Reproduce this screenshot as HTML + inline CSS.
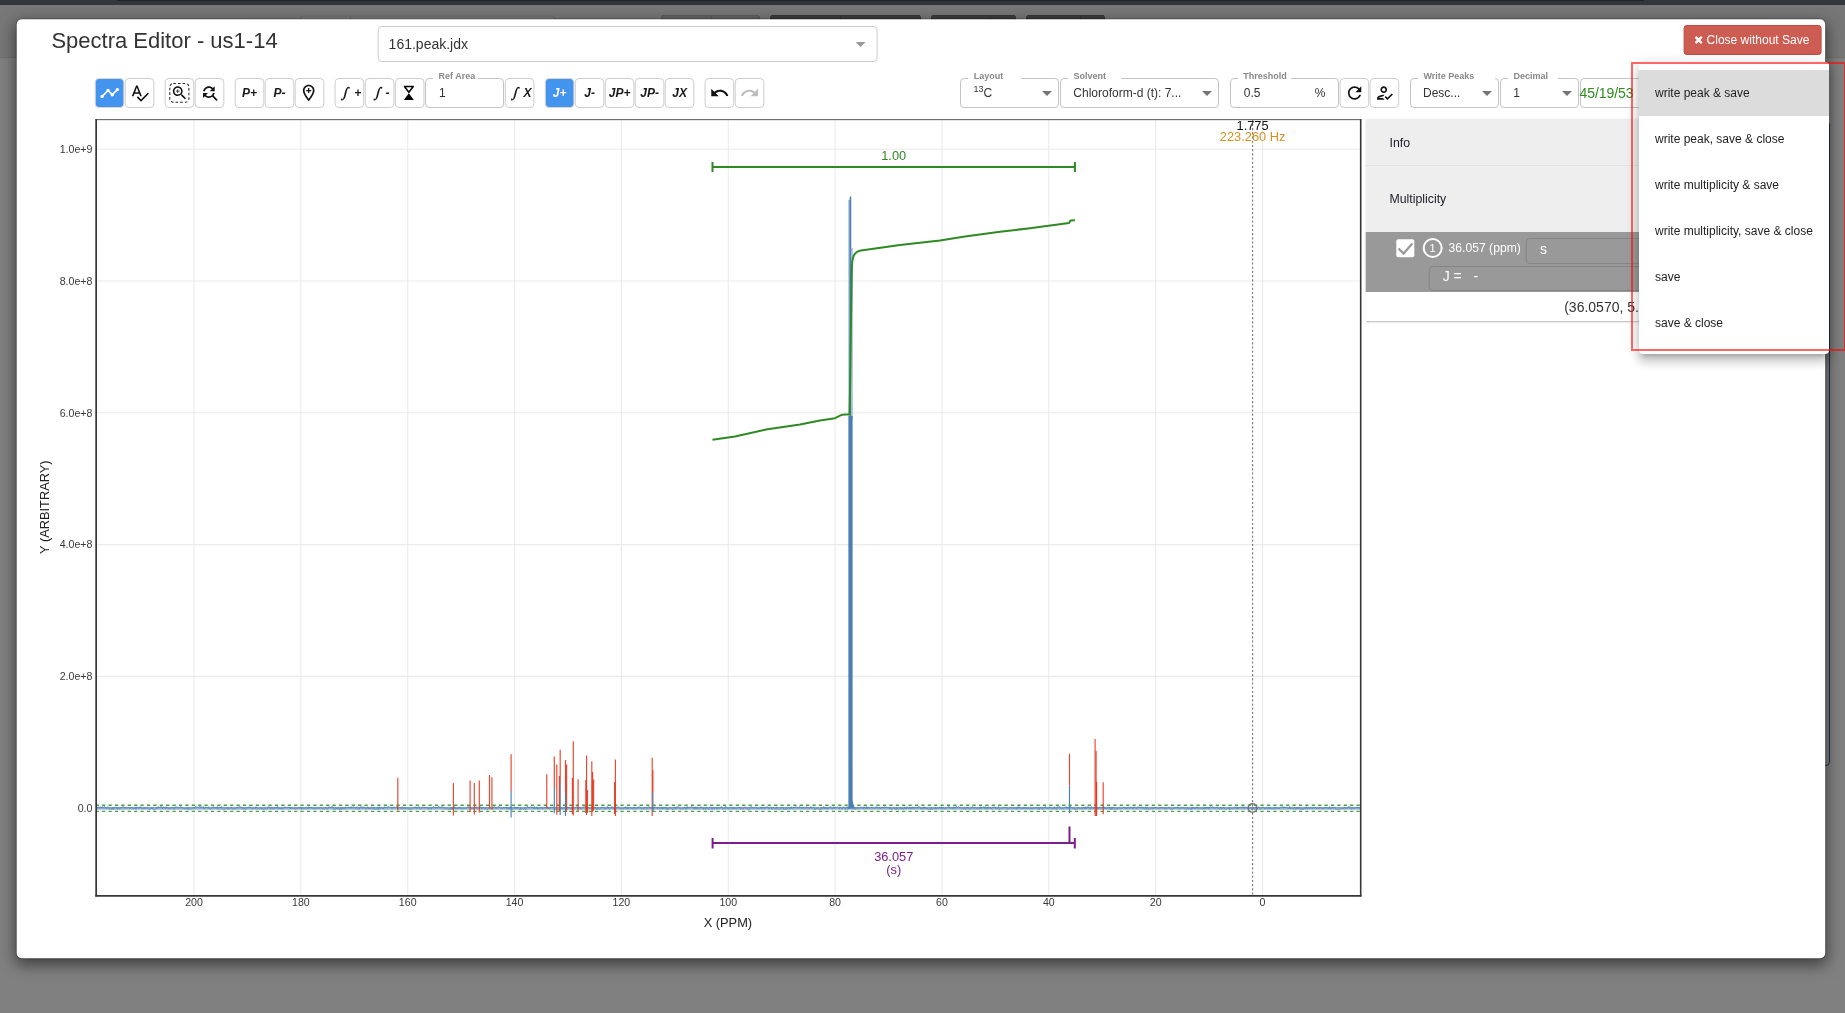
<!DOCTYPE html><html lang="en"><head><meta charset="utf-8"><title>Spectra Editor - us1-14</title><style>
*{box-sizing:border-box}
html,body{margin:0;padding:0}
body{width:1845px;height:1013px;overflow:hidden;background:#808080;position:relative;font-family:"Liberation Sans",sans-serif;color:#333;font-size:14px}
.abs{position:absolute}
.topbar{left:0;top:0;width:1845px;height:5px;background:#35363b}
.nav{left:0;top:5px;width:1845px;height:53px;background:#777;border-bottom:1px solid #707070}
.bgb{top:14px;height:8px;border-radius:4px 4px 0 0;border:1px solid #6a6a6a;border-bottom:0}
.modal{left:15px;top:18px;width:1811px;height:941px;transform-origin:100% 0;transform:translate(0.200px,0.250px) scaleX(0.99972);background:#fff;border:1px solid rgba(0,0,0,.2);border-radius:6px;box-shadow:0 5px 15px rgba(0,0,0,.5);background-clip:padding-box}
  .title{left:51.400px;top:26px;font-size:22px;line-height:30px;color:#333;white-space:nowrap}
.fsel{left:378px;top:26px;transform:translateX(-0.400px);width:500px;height:36px;border:1px solid #ccc;border-radius:4px;background:#fff;line-height:34px;padding-left:10px;font-size:14px;color:#333}
.fsel i{position:absolute;right:11px;top:15px;width:0;height:0;border-style:solid;border-width:5px 5px 0 5px;border-color:#999 transparent transparent transparent}
.close{left:1683px;top:25px;width:137.500px;height:30px;transform:translateX(0.600px);background:#cd5c52;border:1px solid #c24a3e;border-radius:3px;color:#fff;font-size:12px;line-height:28px;text-align:center;white-space:nowrap}
.tb{top:78px;height:30px;width:30px;text-align:center;font-size:12px;line-height:31px;font-weight:bold;font-style:italic;color:#1a1a1a;white-space:nowrap}
.tb.on{color:#fff}
.tb .bx{position:absolute;left:0;top:0;overflow:visible}
.tb .ct{position:absolute;left:0;top:0;width:29.600px;height:30px}
.tb .ig{font-family:'DejaVu Math TeX Gyre','DejaVu Sans',sans-serif;font-weight:bold;font-style:italic;font-size:12px;position:absolute;top:-0.500px;line-height:30px}
.tb .ab{position:absolute;top:0}
.tb .ic{position:absolute;left:50%;top:50%;transform:translate(-50%,-50%)}
.fld{top:78px;height:30px;border:1px solid #c4c4c4;border-radius:4px;background:#fff;font-size:12px;line-height:29px;color:#333;white-space:nowrap}
.fld .lb{position:absolute;top:-8px;height:10px;background:#fff;font-size:9px;line-height:10px;font-weight:bold;color:#888;white-space:nowrap}
.fld .tx{position:absolute;left:13px;top:0}
.fld .dd{position:absolute;right:-1px;top:2px}
sup.iso{font-size:9px;vertical-align:baseline;position:relative;top:-5.500px;line-height:1px}
</style></head><body><div id="root" class="abs" style="left:0;top:0;width:1845px;height:1013px;will-change:transform">
<div class="abs nav"></div><div class="abs topbar"></div><div class="abs" style="left:117px;top:0;width:1527px;height:1px;background:#212227;border-radius:0 0 2px 2px"></div>
<div class="abs bgb" style="left:300px;width:255px;background:#7c7c7c;border-color:#696969;transform:translateY(1.4px)"><div class="abs" style="left:48.5px;top:0;width:1px;height:8px;background:#696969"></div></div>
<div class="abs bgb" style="left:661px;width:99px;background:#636363;border-color:#585858;transform:translateY(0.5px)"><div class="abs" style="left:48.6px;top:0;width:1px;height:8px;background:#585858"></div></div>
<div class="abs bgb" style="left:770px;width:151px;background:#3c3c3c;border-color:#333;transform:translateY(0.5px)"><div class="abs" style="left:68.7px;top:0;width:1px;height:8px;background:#333"></div></div>
<div class="abs bgb" style="left:931px;width:85px;background:#3c3c3c;border-color:#333;transform:translateY(0.5px)"><div class="abs" style="left:58px;top:0;width:1px;height:8px;background:#333"></div></div>
<div class="abs bgb" style="left:1026px;width:79px;background:#3c3c3c;border-color:#333;transform:translateY(0.5px)"><div class="abs" style="left:52.7px;top:0;width:1px;height:8px;background:#333"></div></div>
<div class="abs" style="left:1700px;top:121px;width:130px;height:645px;border:1px solid #1c3150;border-radius:4px"></div>
<div class="abs modal"></div>
<div class="abs title">Spectra Editor - us1-14</div>
<div class="abs fsel">161.peak.jdx<i></i></div>
<div class="abs close"><svg width="8" height="8" viewBox="0 0 8 8" style="position:absolute;left:9.900px;top:10px;overflow:visible" aria-hidden="true"><path d="M0.900 0.900L7.100 7.100M7.100 0.900L0.900 7.100" stroke="#fff" stroke-width="2.350" stroke-linecap="butt" fill="none"/></svg><span style="position:absolute;left:22px;top:0">Close without Save</span></div>
<div class="abs tb on" style="left:94px;"><svg class="bx" width="31" height="30" viewBox="0 0 31 30"><rect x="1.25" y="0.500" width="28.600" height="29" rx="3.800" fill="#4394ee" stroke="#ddd6d0" stroke-width="1"/></svg><div class="ct" style="transform:translateX(0.75px)"><svg class="ic" width="20.4" height="20.4" viewBox="0 0 24 24" fill="#fff" ><path d="M23 8c0 1.1-.9 2-2 2-.18 0-.35-.02-.51-.07l-3.56 3.55c.05.16.07.34.07.52 0 1.1-.9 2-2 2s-2-.9-2-2c0-.18.02-.36.07-.52l-2.55-2.55c-.16.05-.34.07-.52.07s-.36-.02-.52-.07l-4.55 4.56c.05.16.07.33.07.51 0 1.1-.9 2-2 2s-2-.9-2-2 .9-2 2-2c.18 0 .35.02.51.07l4.56-4.55C8.02 9.36 8 9.18 8 9c0-1.1.9-2 2-2s2 .9 2 2c0 .18-.02.36-.07.52l2.55 2.55c.16-.05.34-.07.52-.07s.36.02.52.07l3.55-3.56C19.02 8.35 19 8.18 19 8c0-1.1.9-2 2-2s2 .9 2 2z"/></svg></div></div>
<div class="abs tb" style="left:124px;"><svg class="bx" width="31" height="30" viewBox="0 0 31 30"><rect x="1.25" y="0.500" width="28.600" height="29" rx="3.800" fill="#fff" stroke="#cdcdcd" stroke-width="1"/></svg><div class="ct" style="transform:translateX(0.75px)"><svg class="ic" width="20" height="20" viewBox="0 0 24 24" fill="#111" ><path d="M12.45 16h2.09L9.43 3H7.57L2.46 16h2.09l1.12-3h5.64l1.14 3zm-6.02-5L8.5 5.48 10.57 11H6.43zm15.16.59l-8.09 8.09L9.83 16l-1.41 1.41 5.09 5.09L23 13l-1.41-1.41z"/></svg></div></div>
<div class="abs tb" style="left:164px;"><svg class="bx" width="31" height="30" viewBox="0 0 31 30"><rect x="1.15" y="0.500" width="28.600" height="29" rx="3.800" fill="#fff" stroke="#cdcdcd" stroke-width="1"/></svg><div class="ct" style="transform:translateX(0.65px)"><svg class="ic" width="22" height="22" viewBox="0 0 22 22"><rect x="1.150" y="1.400" width="19.100" height="18.800" rx="3.500" fill="none" stroke="#222" stroke-width="1.050" stroke-dasharray="2.600 2.050"/></svg><svg class="ic" width="18" height="18" viewBox="0 0 24 24" fill="#111" ><path d="M15.5 14h-.79l-.28-.27C15.41 12.59 16 11.11 16 9.5 16 5.91 13.09 3 9.5 3S3 5.91 3 9.5 5.91 16 9.5 16c1.61 0 3.09-.59 4.23-1.57l.27.28v.79l5 4.99L20.49 19l-4.99-5zm-6 0C7.01 14 5 11.99 5 9.5S7.01 5 9.5 5 14 7.01 14 9.5 11.99 14 9.5 14z"/><path d="M12 10h-2v2H9v-2H7V9h2V7h1v2h2v1z"/></svg></div></div>
<div class="abs tb" style="left:194px;"><svg class="bx" width="31" height="30" viewBox="0 0 31 30"><rect x="1.20" y="0.500" width="28.600" height="29" rx="3.800" fill="#fff" stroke="#cdcdcd" stroke-width="1"/></svg><div class="ct" style="transform:translateX(0.70px)"><svg class="ic" width="20" height="20" viewBox="0 0 24 24" fill="#111" ><path d="M11 6c1.38 0 2.63.56 3.54 1.46L12 10h6V4l-2.05 2.05C14.68 4.78 12.93 4 11 4c-3.53 0-6.43 2.61-6.92 6H6.1c.46-2.28 2.48-4 4.9-4zm5.64 9.14c.66-.9 1.12-1.97 1.28-3.14H15.9c-.46 2.28-2.48 4-4.9 4-1.38 0-2.63-.56-3.54-1.46L10 12H4v6l2.05-2.05C7.32 17.22 9.07 18 11 18c1.55 0 2.98-.51 4.14-1.36L20 21.49 21.49 20l-4.85-4.86z"/></svg></div></div>
<div class="abs tb" style="left:234px;"><svg class="bx" width="31" height="30" viewBox="0 0 31 30"><rect x="1.20" y="0.500" width="28.600" height="29" rx="3.800" fill="#fff" stroke="#cdcdcd" stroke-width="1"/></svg><div class="ct" style="transform:translateX(0.70px)">P+</div></div>
<div class="abs tb" style="left:264px;"><svg class="bx" width="31" height="30" viewBox="0 0 31 30"><rect x="1.20" y="0.500" width="28.600" height="29" rx="3.800" fill="#fff" stroke="#cdcdcd" stroke-width="1"/></svg><div class="ct" style="transform:translateX(0.70px)">P-</div></div>
<div class="abs tb" style="left:294px;"><svg class="bx" width="31" height="30" viewBox="0 0 31 30"><rect x="1.20" y="0.500" width="28.600" height="29" rx="3.800" fill="#fff" stroke="#cdcdcd" stroke-width="1"/></svg><div class="ct" style="transform:translateX(0.70px)"><svg class="ic" width="20" height="20" viewBox="0 0 24 24" fill="#111" style="margin-left:-0.500px;margin-top:-0.300px"><path fill-rule="evenodd" d="M12 2C8.130 2 5 5.130 5 9c0 5.250 7 13 7 13s7-7.750 7-13c0-3.870-3.130-7-7-7zM12 4c2.760 0 5 2.240 5 5 0 2.880-2.880 7.190-5 9.880C9.920 16.210 7 11.850 7 9c0-2.760 2.240-5 5-5z"/><path d="M12.750 6h-1.500v2.250H9v1.500h2.250V12h1.500V9.750H15v-1.500h-2.250z"/></svg></div></div>
<div class="abs tb" style="left:334px;"><svg class="bx" width="31" height="30" viewBox="0 0 31 30"><rect x="1.10" y="0.500" width="28.600" height="29" rx="3.800" fill="#fff" stroke="#cdcdcd" stroke-width="1"/></svg><div class="ct" style="transform:translateX(0.60px)"><span class="ig" style="left:6.500px">&#8747;</span><span class="ab" style="left:19.700px">+</span></div></div>
<div class="abs tb" style="left:364px;"><svg class="bx" width="31" height="30" viewBox="0 0 31 30"><rect x="1.30" y="0.500" width="28.600" height="29" rx="3.800" fill="#fff" stroke="#cdcdcd" stroke-width="1"/></svg><div class="ct" style="transform:translateX(0.80px)"><span class="ig" style="left:8.600px">&#8747;</span><span class="ab" style="left:20.700px">-</span></div></div>
<div class="abs tb" style="left:394px;"><svg class="bx" width="31" height="30" viewBox="0 0 31 30"><rect x="1.35" y="0.500" width="28.600" height="29" rx="3.800" fill="#fff" stroke="#cdcdcd" stroke-width="1"/></svg><div class="ct" style="transform:translateX(0.85px)"><svg class="ic" style="margin-left:-0.600px;margin-top:-0.400px" width="12" height="16" viewBox="0 0 12 16"><path d="M1 1.500h10M1.800 1.800L6 7.200 10.200 1.800" fill="none" stroke="#000" stroke-width="1.500"/><path d="M6 8.300L11 15H1z" fill="#000"/></svg></div></div>
<div class="abs fld" style="left:425px;width:79px"><span class="lb" style="left:7px;width:45px;padding-left:5.500px">Ref Area</span><span class="tx">1</span></div>
<div class="abs tb" style="left:504px;"><svg class="bx" width="31" height="30" viewBox="0 0 31 30"><rect x="1.30" y="0.500" width="28.600" height="29" rx="3.800" fill="#fff" stroke="#cdcdcd" stroke-width="1"/></svg><div class="ct" style="transform:translateX(0.80px)"><span class="ig" style="left:6.300px">&#8747;</span><span class="ab" style="left:18.600px">X</span></div></div>
<div class="abs tb on" style="left:544px;"><svg class="bx" width="31" height="30" viewBox="0 0 31 30"><rect x="1.30" y="0.500" width="28.600" height="29" rx="3.800" fill="#4394ee" stroke="#ddd6d0" stroke-width="1"/></svg><div class="ct" style="transform:translateX(0.80px)">J+</div></div>
<div class="abs tb" style="left:574px;"><svg class="bx" width="31" height="30" viewBox="0 0 31 30"><rect x="1.25" y="0.500" width="28.600" height="29" rx="3.800" fill="#fff" stroke="#cdcdcd" stroke-width="1"/></svg><div class="ct" style="transform:translateX(0.75px)">J-</div></div>
<div class="abs tb" style="left:604px;"><svg class="bx" width="31" height="30" viewBox="0 0 31 30"><rect x="1.25" y="0.500" width="28.600" height="29" rx="3.800" fill="#fff" stroke="#cdcdcd" stroke-width="1"/></svg><div class="ct" style="transform:translateX(0.75px)">JP+</div></div>
<div class="abs tb" style="left:634px;"><svg class="bx" width="31" height="30" viewBox="0 0 31 30"><rect x="1.25" y="0.500" width="28.600" height="29" rx="3.800" fill="#fff" stroke="#cdcdcd" stroke-width="1"/></svg><div class="ct" style="transform:translateX(0.75px)">JP-</div></div>
<div class="abs tb" style="left:664px;"><svg class="bx" width="31" height="30" viewBox="0 0 31 30"><rect x="1.25" y="0.500" width="28.600" height="29" rx="3.800" fill="#fff" stroke="#cdcdcd" stroke-width="1"/></svg><div class="ct" style="transform:translateX(0.75px)">JX</div></div>
<div class="abs tb" style="left:704px;"><svg class="bx" width="31" height="30" viewBox="0 0 31 30"><rect x="1.10" y="0.500" width="28.600" height="29" rx="3.800" fill="#fff" stroke="#cdcdcd" stroke-width="1"/></svg><div class="ct" style="transform:translateX(0.60px)"><svg class="ic" width="20" height="20" viewBox="0 0 24 24" fill="#111" ><path d="M12.500 8c-2.650 0-5.050.990-6.900 2.600L2 7v9h9l-3.620-3.620c1.390-1.160 3.160-1.880 5.120-1.880 3.540 0 6.550 2.310 7.600 5.500l2.370-.78C21.080 11.030 17.150 8 12.500 8z"/></svg></div></div>
<div class="abs tb" style="left:734px;"><svg class="bx" width="31" height="30" viewBox="0 0 31 30"><rect x="1.20" y="0.500" width="28.600" height="29" rx="3.800" fill="#fff" stroke="#cdcdcd" stroke-width="1"/></svg><div class="ct" style="transform:translateX(0.70px)"><svg class="ic" width="20" height="20" viewBox="0 0 24 24" fill="#bdbdbd" ><path d="M18.400 10.600C16.550 8.990 14.150 8 11.500 8c-4.650 0-8.580 3.030-9.960 7.220L3.900 16c1.050-3.190 4.050-5.500 7.600-5.500 1.950 0 3.730.72 5.120 1.880L13 16h9V7l-3.600 3.600z"/></svg></div></div>
<div class="abs fld" style="left:959.600px;width:99.500px"><span class="lb" style="left:7px;width:53px;padding-left:6.200px">Layout</span><span class="tx"><sup class="iso">13</sup>C</span><svg class="ic" width="24" height="24" viewBox="0 0 24 24" fill="#757575" style="position:absolute;right:-1px;top:2px"><path d="M7 10l5 5 5-5z"/></svg></div>
<div class="abs fld" style="left:1060px;width:159.300px"><span class="lb" style="left:7px;width:53px;padding-left:5.500px">Solvent</span><span class="tx" style="left:12.300px">Chloroform-d (t): 7...</span><svg class="ic" width="24" height="24" viewBox="0 0 24 24" fill="#757575" style="position:absolute;right:-1px;top:2px"><path d="M7 10l5 5 5-5z"/></svg></div>
<div class="abs fld" style="left:1229.800px;width:109.200px"><span class="lb" style="left:7px;width:53px;padding-left:5.500px">Threshold</span><span class="tx">0.5</span><span class="abs" style="left:84px;top:0">%</span></div>
<div class="abs tb" style="left:1339px;"><svg class="bx" width="31" height="30" viewBox="0 0 31 30"><rect x="1.10" y="0.500" width="28.600" height="29" rx="3.800" fill="#fff" stroke="#cdcdcd" stroke-width="1"/></svg><div class="ct" style="transform:translateX(0.60px)"><svg class="ic" width="20" height="20" viewBox="0 0 24 24" fill="#111" ><path d="M17.650 6.350C16.200 4.900 14.210 4 12 4c-4.420 0-7.990 3.580-7.990 8s3.570 8 7.990 8c3.730 0 6.840-2.550 7.730-6h-2.080c-.82 2.330-3.040 4-5.650 4-3.310 0-6-2.690-6-6s2.690-6 6-6c1.660 0 3.140.69 4.220 1.780L13 11h7V4l-2.350 2.350z"/></svg></div></div>
<div class="abs tb" style="left:1369px;"><svg class="bx" width="31" height="30" viewBox="0 0 31 30"><rect x="1.10" y="0.500" width="28.600" height="29" rx="3.800" fill="#fff" stroke="#cdcdcd" stroke-width="1"/></svg><div class="ct" style="transform:translateX(0.60px)"><svg class="ic" width="20" height="20" viewBox="0 0 24 24" fill="#111" ><path d="M11 12c2.210 0 4-1.790 4-4s-1.790-4-4-4-4 1.790-4 4 1.790 4 4 4zm0-6c1.100 0 2 .9 2 2s-.9 2-2 2-2-.9-2-2 .9-2 2-2zM5 18c.2-.63 2.570-1.680 4.960-1.940l2.040-2c-.39-.04-.68-.06-1-.06-2.670 0-8 1.340-8 4v2h9l-2-2H5zm15.600-5.500l-5.130 5.170-2.070-2.080L12 17l3.470 3.500L22 13.910z"/></svg></div></div>
<div class="abs fld" style="left:1410px;width:88.800px"><span class="lb" style="left:7px;width:77px;padding-left:5.500px">Write Peaks</span><span class="tx" style="left:12px">Desc...</span><svg class="ic" width="24" height="24" viewBox="0 0 24 24" fill="#757575" style="position:absolute;right:-1px;top:2px"><path d="M7 10l5 5 5-5z"/></svg></div>
<div class="abs fld" style="left:1500px;width:79.200px"><span class="lb" style="left:7px;width:50px;padding-left:5.500px">Decimal</span><span class="tx" style="left:12.300px">1</span><svg class="ic" width="24" height="24" viewBox="0 0 24 24" fill="#757575" style="position:absolute;right:-1px;top:2px"><path d="M7 10l5 5 5-5z"/></svg></div>
<div class="abs fld" style="left:1580.300px;width:200px;font-size:14px;color:#2e8b1e"><span class="abs" style="left:-1.800px;top:0;letter-spacing:-0.050px">45/19/53</span></div>
<svg class="abs" style="left:0;top:0" width="1845" height="1013" viewBox="0 0 1845 1013" font-family="Liberation Sans, sans-serif">
<path d="M1262.50 120V895M1155.65 120V895M1048.80 120V895M941.95 120V895M835.10 120V895M728.25 120V895M621.40 120V895M514.55 120V895M407.70 120V895M300.85 120V895M194.00 120V895M97 808.20H1360M97 676.40H1360M97 544.60H1360M97 412.80H1360M97 281.00H1360M97 149.20H1360" stroke="#ebebeb" stroke-width="1.1" fill="none"/>
<g font-size="10.600" fill="#3a3a3a" text-anchor="end">
<text x="92.400" y="811.90">0.0</text>
<text x="92.400" y="680.10">2.0e+8</text>
<text x="92.400" y="548.30">4.0e+8</text>
<text x="92.400" y="416.50">6.0e+8</text>
<text x="92.400" y="284.70">8.0e+8</text>
<text x="92.400" y="152.90">1.0e+9</text>
</g><g font-size="10.600" fill="#3a3a3a" text-anchor="middle">
<text x="1262.50" y="906.300">0</text>
<text x="1155.65" y="906.300">20</text>
<text x="1048.80" y="906.300">40</text>
<text x="941.95" y="906.300">60</text>
<text x="835.10" y="906.300">80</text>
<text x="728.25" y="906.300">100</text>
<text x="621.40" y="906.300">120</text>
<text x="514.55" y="906.300">140</text>
<text x="407.70" y="906.300">160</text>
<text x="300.85" y="906.300">180</text>
<text x="194.00" y="906.300">200</text>
</g>
<text x="727.900" y="927.300" font-size="12.800" fill="#222" text-anchor="middle">X (PPM)</text>
<text transform="translate(48.800,507.200) rotate(-90)" font-size="12.800" fill="#222" text-anchor="middle">Y (ARBITRARY)</text>
<clipPath id="cp"><rect x="96.400" y="119.700" width="1264.400" height="775.700"/></clipPath>
<g clip-path="url(#cp)">
<path d="M95.700 805.250H1361M95.700 811.350H1361" stroke="#48a03a" stroke-width="1.300" stroke-dasharray="3.200 3.200" fill="none"/>
<polyline points="96.0 807.44 96.8 806.94 97.6 808.39 98.4 806.71 99.2 808.05 100.0 807.56 100.8 806.67 101.6 807.97 102.4 806.61 103.2 807.76 104.0 806.70 104.8 806.76 105.6 807.73 106.4 808.90 107.2 806.86 108.0 807.15 108.8 808.32 109.6 809.25 110.4 808.17 111.2 808.25 112.0 809.93 112.8 807.24 113.6 809.59 114.4 807.94 115.2 807.52 116.0 807.44 116.8 807.99 117.6 809.47 118.4 807.62 119.2 808.79 120.0 808.95 120.8 807.58 121.6 808.09 122.4 806.68 123.2 806.67 124.0 807.10 124.8 808.47 125.6 807.74 126.4 807.41 127.2 808.20 128.0 807.81 128.8 807.37 129.6 808.80 130.4 808.53 131.2 807.21 132.0 808.17 132.8 808.02 133.6 809.04 134.4 808.62 135.2 807.34 136.0 809.34 136.8 806.84 137.6 807.71 138.4 808.70 139.2 806.94 140.0 807.92 140.8 806.61 141.6 808.44 142.4 808.72 143.2 808.16 144.0 809.04 144.8 807.41 145.6 808.52 146.4 808.22 147.2 808.18 148.0 808.42 148.8 809.54 149.6 809.84 150.4 808.47 151.2 809.03 152.0 807.28 152.8 809.13 153.6 808.98 154.4 809.98 155.2 809.48 156.0 807.93 156.8 808.22 157.6 808.44 158.4 806.57 159.2 807.84 160.0 806.99 160.8 806.84 161.6 806.67 162.4 808.73 163.2 806.88 164.0 807.22 164.8 807.63 165.6 809.03 166.4 806.73 167.2 807.80 168.0 808.09 168.8 809.06 169.6 808.88 170.4 809.01 171.2 807.31 172.0 807.70 172.8 807.54 173.6 809.06 174.4 809.28 175.2 806.94 176.0 807.01 176.8 807.17 177.6 807.18 178.4 807.91 179.2 808.21 180.0 807.26 180.8 806.51 181.6 807.71 182.4 807.57 183.2 808.14 184.0 809.26 184.8 808.50 185.6 808.59 186.4 808.89 187.2 809.06 188.0 807.26 188.8 809.71 189.6 809.36 190.4 809.64 191.2 809.41 192.0 808.24 192.8 808.26 193.6 807.40 194.4 808.34 195.2 806.68 196.0 806.70 196.8 807.11 197.6 806.97 198.4 807.49 199.2 806.65 200.0 806.50 200.8 806.94 201.6 806.79 202.4 807.55 203.2 806.57 204.0 809.04 204.8 808.28 205.6 806.93 206.4 807.23 207.2 807.51 208.0 807.56 208.8 806.86 209.6 808.96 210.4 809.38 211.2 807.85 212.0 807.90 212.8 806.75 213.6 806.80 214.4 807.49 215.2 807.27 216.0 808.90 216.8 806.97 217.6 806.57 218.4 809.26 219.2 808.03 220.0 806.93 220.8 808.08 221.6 806.58 222.4 808.63 223.2 809.94 224.0 809.60 224.8 809.12 225.6 807.86 226.4 808.16 227.2 807.58 228.0 809.34 228.8 808.64 229.6 809.36 230.4 808.06 231.2 807.15 232.0 808.85 232.8 809.36 233.6 808.97 234.4 808.84 235.2 808.87 236.0 808.65 236.8 807.16 237.6 808.00 238.4 807.53 239.2 806.58 240.0 806.58 240.8 807.31 241.6 807.25 242.4 808.51 243.2 809.27 244.0 807.80 244.8 809.22 245.6 809.37 246.4 809.27 247.2 807.56 248.0 807.14 248.8 807.16 249.6 807.07 250.4 807.09 251.2 808.31 252.0 809.11 252.8 808.94 253.6 807.89 254.4 808.39 255.2 808.82 256.0 806.75 256.8 808.42 257.6 809.14 258.4 808.77 259.2 809.28 260.0 808.49 260.8 807.62 261.6 809.39 262.4 808.06 263.2 809.42 264.0 809.92 264.8 808.25 265.6 808.26 266.4 809.85 267.2 809.20 268.0 806.99 268.8 806.87 269.6 806.94 270.4 809.12 271.2 808.84 272.0 806.92 272.8 808.90 273.6 809.34 274.4 808.41 275.2 807.52 276.0 808.09 276.8 806.88 277.6 806.54 278.4 809.32 279.2 808.38 280.0 808.03 280.8 809.21 281.6 807.76 282.4 809.03 283.2 808.90 284.0 807.11 284.8 807.23 285.6 807.35 286.4 807.20 287.2 808.20 288.0 807.25 288.8 807.72 289.6 806.88 290.4 809.14 291.2 807.53 292.0 807.83 292.8 808.19 293.6 809.12 294.4 807.72 295.2 809.16 296.0 808.55 296.8 808.64 297.6 808.62 298.4 807.15 299.2 808.38 300.0 807.63 300.8 807.11 301.6 809.42 302.4 807.60 303.2 808.47 304.0 809.20 304.8 808.71 305.6 807.45 306.4 808.00 307.2 808.11 308.0 808.77 308.8 806.81 309.6 808.12 310.4 807.22 311.2 807.30 312.0 808.74 312.8 807.97 313.6 808.13 314.4 808.70 315.2 809.15 316.0 807.79 316.8 808.28 317.6 807.97 318.4 807.99 319.2 808.51 320.0 807.81 320.8 808.05 321.6 807.89 322.4 809.23 323.2 808.53 324.0 809.04 324.8 809.23 325.6 807.25 326.4 808.12 327.2 809.24 328.0 808.94 328.8 806.90 329.6 806.85 330.4 807.78 331.2 806.71 332.0 807.20 332.8 806.71 333.6 809.04 334.4 809.37 335.2 809.70 336.0 807.55 336.8 809.18 337.6 809.01 338.4 807.51 339.2 809.66 340.0 809.91 340.8 807.74 341.6 809.86 342.4 807.65 343.2 807.91 344.0 809.37 344.8 808.91 345.6 806.97 346.4 807.75 347.2 808.00 348.0 807.48 348.8 807.07 349.6 807.42 350.4 808.59 351.2 806.56 352.0 808.11 352.8 807.78 353.6 806.55 354.4 807.46 355.2 808.31 356.0 807.99 356.8 806.69 357.6 809.36 358.4 808.79 359.2 809.32 360.0 806.80 360.8 807.27 361.6 806.61 362.4 808.76 363.2 807.28 364.0 806.88 364.8 807.72 365.6 809.14 366.4 808.88 367.2 807.25 368.0 806.93 368.8 809.17 369.6 808.15 370.4 809.13 371.2 807.36 372.0 807.27 372.8 809.10 373.6 808.33 374.4 807.31 375.2 809.82 376.0 808.94 376.8 809.42 377.6 807.34 378.4 809.58 379.2 806.69 380.0 809.00 380.8 807.82 381.6 807.48 382.4 808.10 383.2 809.19 384.0 807.28 384.8 806.87 385.6 808.03 386.4 807.19 387.2 806.82 388.0 806.97 388.8 806.65 389.6 807.09 390.4 807.40 391.2 807.38 392.0 808.70 392.8 807.34 393.6 807.95 394.4 807.02 395.2 807.51 396.0 806.55 396.8 807.23 397.6 806.54 398.4 808.63 399.2 808.10 400.0 807.05 400.8 807.88 401.6 809.21 402.4 806.81 403.2 808.87 404.0 807.75 404.8 807.94 405.6 808.92 406.4 807.64 407.2 808.57 408.0 809.09 408.8 809.95 409.6 808.09 410.4 809.51 411.2 809.15 412.0 808.94 412.8 808.27 413.6 808.11 414.4 807.26 415.2 807.48 416.0 806.71 416.8 808.65 417.6 807.24 418.4 806.97 419.2 806.75 420.0 808.94 420.8 809.02 421.6 808.44 422.4 807.32 423.2 807.20 424.0 807.35 424.8 807.83 425.6 806.96 426.4 807.79 427.2 807.26 428.0 809.29 428.8 809.32 429.6 808.09 430.4 807.21 431.2 809.30 432.0 807.40 432.8 807.53 433.6 806.50 434.4 807.61 435.2 807.88 436.0 807.96 436.8 807.08 437.6 807.96 438.4 806.51 439.2 807.27 440.0 806.76 440.8 807.66 441.6 806.62 442.4 806.57 443.2 807.38 444.0 807.78 444.8 808.80 445.6 808.63 446.4 809.28 447.2 809.01 448.0 809.18 448.8 809.65 449.6 808.23 450.4 808.05 451.2 809.96 452.0 807.53 452.8 809.20 453.6 808.37 454.4 806.63 455.2 808.92 456.0 809.09 456.8 808.32 457.6 808.63 458.4 808.86 459.2 806.90 460.0 808.02 460.8 807.96 461.6 808.92 462.4 808.83 463.2 808.90 464.0 808.19 464.8 809.09 465.6 808.48 466.4 808.51 467.2 807.17 468.0 806.59 468.8 806.89 469.6 807.55 470.4 806.80 471.2 808.92 472.0 808.12 472.8 808.32 473.6 808.32 474.4 808.47 475.2 807.92 476.0 806.51 476.8 808.81 477.6 808.67 478.4 807.96 479.2 808.05 480.0 808.41 480.8 806.69 481.6 809.24 482.4 807.83 483.2 807.32 484.0 807.87 484.8 809.22 485.6 807.70 486.4 809.25 487.2 809.93 488.0 808.53 488.8 808.21 489.6 808.49 490.4 808.48 491.2 808.72 492.0 808.29 492.8 808.36 493.6 806.72 494.4 806.93 495.2 807.24 496.0 808.66 496.8 807.38 497.6 808.15 498.4 806.54 499.2 806.68 500.0 807.28 500.8 808.45 501.6 808.51 502.4 808.46 503.2 807.34 504.0 808.00 504.8 807.85 505.6 807.85 506.4 806.84 507.2 809.09 508.0 807.08 508.8 809.34 509.6 809.22 510.4 806.55 511.2 807.83 512.0 808.88 512.8 809.31 513.6 807.80 514.4 807.28 515.2 807.11 516.0 809.24 516.8 807.11 517.6 808.19 518.4 807.51 519.2 808.62 520.0 809.86 520.8 807.48 521.6 809.48 522.4 808.58 523.2 809.67 524.0 809.14 524.8 807.77 525.6 809.70 526.4 808.51 527.2 806.57 528.0 806.51 528.8 807.93 529.6 807.81 530.4 807.38 531.2 806.91 532.0 807.50 532.8 807.42 533.6 808.94 534.4 806.51 535.2 808.68 536.0 808.93 536.8 806.85 537.6 809.19 538.4 808.57 539.2 809.11 540.0 807.34 540.8 807.58 541.6 807.64 542.4 809.40 543.2 808.21 544.0 807.55 544.8 807.74 545.6 807.30 546.4 806.64 547.2 806.79 548.0 808.92 548.8 807.33 549.6 809.21 550.4 807.22 551.2 807.27 552.0 807.98 552.8 807.05 553.6 807.58 554.4 809.27 555.2 809.66 556.0 809.45 556.8 808.93 557.6 809.75 558.4 809.83 559.2 808.69 560.0 809.19 560.8 807.24 561.6 809.22 562.4 808.41 563.2 809.28 564.0 808.37 564.8 807.33 565.6 806.64 566.4 809.19 567.2 806.87 568.0 807.87 568.8 807.50 569.6 807.36 570.4 808.64 571.2 809.33 572.0 807.25 572.8 808.40 573.6 807.37 574.4 808.12 575.2 807.64 576.0 806.99 576.8 806.97 577.6 807.10 578.4 809.13 579.2 807.94 580.0 807.14 580.8 809.13 581.6 809.39 582.4 807.80 583.2 806.90 584.0 807.06 584.8 806.76 585.6 807.49 586.4 806.76 587.2 807.19 588.0 807.25 588.8 808.15 589.6 809.07 590.4 808.67 591.2 807.70 592.0 808.30 592.8 808.62 593.6 808.19 594.4 808.08 595.2 807.28 596.0 807.90 596.8 809.91 597.6 807.47 598.4 808.56 599.2 808.93 600.0 809.60 600.8 807.73 601.6 807.29 602.4 807.22 603.2 807.66 604.0 807.79 604.8 809.27 605.6 808.96 606.4 809.03 607.2 806.56 608.0 806.59 608.8 808.56 609.6 809.10 610.4 807.87 611.2 808.20 612.0 806.50 612.8 807.64 613.6 809.19 614.4 808.89 615.2 808.98 616.0 809.32 616.8 807.22 617.6 806.82 618.4 806.95 619.2 808.01 620.0 808.48 620.8 809.23 621.6 808.59 622.4 808.38 623.2 808.72 624.0 807.83 624.8 808.10 625.6 806.61 626.4 808.77 627.2 807.17 628.0 809.17 628.8 808.37 629.6 807.98 630.4 807.47 631.2 807.83 632.0 808.95 632.8 809.13 633.6 807.43 634.4 807.30 635.2 808.62 636.0 808.79 636.8 808.23 637.6 807.75 638.4 808.24 639.2 806.53 640.0 807.37 640.8 807.84 641.6 809.28 642.4 808.37 643.2 809.06 644.0 807.88 644.8 807.18 645.6 807.22 646.4 809.29 647.2 808.54 648.0 807.39 648.8 806.56 649.6 807.95 650.4 808.46 651.2 807.72 652.0 807.25 652.8 808.44 653.6 809.18 654.4 807.16 655.2 806.60 656.0 807.48 656.8 807.72 657.6 808.48 658.4 807.07 659.2 808.81 660.0 808.64 660.8 807.96 661.6 807.10 662.4 809.31 663.2 807.40 664.0 808.88 664.8 807.17 665.6 807.14 666.4 809.31 667.2 807.96 668.0 809.86 668.8 808.54 669.6 807.64 670.4 807.75 671.2 808.31 672.0 809.03 672.8 809.85 673.6 807.52 674.4 808.24 675.2 807.12 676.0 809.32 676.8 806.91 677.6 806.65 678.4 806.67 679.2 807.64 680.0 809.10 680.8 809.06 681.6 808.62 682.4 809.39 683.2 809.20 684.0 807.45 684.8 807.04 685.6 809.21 686.4 808.66 687.2 806.59 688.0 808.43 688.8 807.60 689.6 807.58 690.4 807.46 691.2 806.99 692.0 806.51 692.8 807.31 693.6 807.52 694.4 809.27 695.2 806.86 696.0 809.30 696.8 807.10 697.6 807.53 698.4 808.88 699.2 808.88 700.0 807.75 700.8 806.64 701.6 807.87 702.4 807.58 703.2 809.77 704.0 807.66 704.8 808.16 705.6 809.70 706.4 807.19 707.2 808.29 708.0 809.45 708.8 809.32 709.6 807.22 710.4 807.20 711.2 807.28 712.0 809.77 712.8 807.25 713.6 808.67 714.4 809.11 715.2 807.48 716.0 807.29 716.8 809.28 717.6 808.29 718.4 807.26 719.2 808.58 720.0 807.42 720.8 807.30 721.6 806.51 722.4 808.69 723.2 809.16 724.0 808.34 724.8 809.24 725.6 806.57 726.4 807.18 727.2 807.88 728.0 809.27 728.8 809.27 729.6 807.62 730.4 807.23 731.2 807.75 732.0 807.93 732.8 809.19 733.6 807.03 734.4 808.83 735.2 808.64 736.0 808.89 736.8 808.74 737.6 808.26 738.4 807.45 739.2 807.43 740.0 807.55 740.8 809.37 741.6 807.33 742.4 807.67 743.2 809.28 744.0 807.82 744.8 807.29 745.6 807.20 746.4 808.70 747.2 808.04 748.0 809.94 748.8 809.66 749.6 809.36 750.4 807.27 751.2 806.74 752.0 806.78 752.8 807.95 753.6 808.56 754.4 807.80 755.2 807.18 756.0 807.71 756.8 808.30 757.6 808.45 758.4 808.67 759.2 808.96 760.0 808.43 760.8 806.85 761.6 808.94 762.4 807.35 763.2 808.14 764.0 807.58 764.8 808.64 765.6 807.08 766.4 807.22 767.2 807.21 768.0 806.94 768.8 809.06 769.6 808.18 770.4 807.45 771.2 807.65 772.0 809.38 772.8 807.97 773.6 807.17 774.4 808.84 775.2 808.39 776.0 809.37 776.8 806.80 777.6 808.48 778.4 809.48 779.2 809.54 780.0 809.75 780.8 807.22 781.6 807.95 782.4 807.45 783.2 807.65 784.0 809.92 784.8 808.79 785.6 809.80 786.4 807.58 787.2 809.01 788.0 807.80 788.8 807.25 789.6 808.76 790.4 809.24 791.2 806.81 792.0 808.23 792.8 808.30 793.6 807.13 794.4 807.57 795.2 806.91 796.0 807.09 796.8 807.24 797.6 808.24 798.4 808.39 799.2 807.09 800.0 806.53 800.8 807.45 801.6 808.47 802.4 807.04 803.2 807.41 804.0 807.09 804.8 808.81 805.6 808.09 806.4 806.68 807.2 806.79 808.0 807.65 808.8 808.10 809.6 808.35 810.4 806.76 811.2 806.97 812.0 808.52 812.8 807.69 813.6 807.32 814.4 807.99 815.2 809.86 816.0 808.01 816.8 808.74 817.6 808.14 818.4 808.31 819.2 809.61 820.0 809.99 820.8 808.15 821.6 807.67 822.4 809.21 823.2 807.09 824.0 806.52 824.8 809.11 825.6 807.73 826.4 808.88 827.2 807.68 828.0 809.06 828.8 807.84 829.6 806.97 830.4 806.54 831.2 808.10 832.0 808.36 832.8 809.14 833.6 806.76 834.4 808.30 835.2 807.58 836.0 807.96 836.8 806.92 837.6 807.32 838.4 808.01 839.2 809.18 840.0 806.82 840.8 807.92 841.6 808.83 842.4 809.30 843.2 807.07 844.0 806.87 844.8 809.23 845.6 809.33 846.4 807.90 847.2 806.65 848.0 808.00 848.8 808.00 849.6 808.00 850.4 808.00 851.2 808.00 852.0 808.00 852.8 808.00 853.6 807.74 854.4 808.27 855.2 809.55 856.0 809.50 856.8 807.63 857.6 807.73 858.4 808.26 859.2 808.60 860.0 808.21 860.8 806.86 861.6 807.22 862.4 808.60 863.2 809.10 864.0 806.62 864.8 808.13 865.6 808.70 866.4 806.61 867.2 808.93 868.0 806.84 868.8 808.24 869.6 808.10 870.4 808.32 871.2 807.39 872.0 807.72 872.8 808.19 873.6 807.73 874.4 808.41 875.2 807.80 876.0 807.77 876.8 806.57 877.6 808.29 878.4 807.92 879.2 807.18 880.0 808.71 880.8 808.76 881.6 807.83 882.4 807.02 883.2 807.87 884.0 806.81 884.8 806.87 885.6 807.75 886.4 806.77 887.2 807.78 888.0 807.98 888.8 807.22 889.6 808.95 890.4 807.34 891.2 809.23 892.0 809.36 892.8 808.58 893.6 807.26 894.4 808.56 895.2 808.20 896.0 809.86 896.8 807.49 897.6 808.99 898.4 809.39 899.2 808.62 900.0 808.86 900.8 807.06 901.6 809.35 902.4 807.93 903.2 809.27 904.0 809.16 904.8 806.98 905.6 808.79 906.4 809.20 907.2 806.69 908.0 807.52 908.8 808.69 909.6 806.96 910.4 809.10 911.2 807.30 912.0 808.87 912.8 806.92 913.6 807.96 914.4 809.17 915.2 807.10 916.0 807.26 916.8 807.97 917.6 807.43 918.4 806.61 919.2 807.03 920.0 806.97 920.8 809.22 921.6 808.47 922.4 809.10 923.2 806.99 924.0 808.78 924.8 806.83 925.6 808.64 926.4 808.95 927.2 808.14 928.0 809.63 928.8 808.71 929.6 808.78 930.4 809.66 931.2 807.40 932.0 809.98 932.8 808.93 933.6 808.24 934.4 808.81 935.2 807.27 936.0 809.37 936.8 808.17 937.6 807.54 938.4 808.72 939.2 807.78 940.0 807.01 940.8 808.66 941.6 806.64 942.4 808.88 943.2 807.24 944.0 808.35 944.8 809.35 945.6 808.20 946.4 808.42 947.2 807.41 948.0 806.51 948.8 806.60 949.6 806.93 950.4 808.29 951.2 807.75 952.0 807.99 952.8 809.10 953.6 806.88 954.4 807.16 955.2 808.39 956.0 806.56 956.8 806.51 957.6 807.53 958.4 806.81 959.2 807.54 960.0 807.15 960.8 808.19 961.6 808.21 962.4 807.69 963.2 808.91 964.0 808.48 964.8 807.49 965.6 809.82 966.4 807.81 967.2 807.53 968.0 807.38 968.8 808.95 969.6 809.63 970.4 809.37 971.2 807.67 972.0 807.27 972.8 806.53 973.6 808.37 974.4 808.13 975.2 807.52 976.0 808.37 976.8 807.79 977.6 809.22 978.4 808.63 979.2 807.22 980.0 809.12 980.8 806.63 981.6 808.04 982.4 807.68 983.2 807.19 984.0 806.67 984.8 808.76 985.6 806.54 986.4 808.10 987.2 809.23 988.0 806.91 988.8 807.08 989.6 808.26 990.4 807.97 991.2 808.36 992.0 808.86 992.8 807.01 993.6 807.40 994.4 807.37 995.2 806.64 996.0 809.08 996.8 808.77 997.6 808.57 998.4 806.52 999.2 809.55 1000.0 809.26 1000.8 808.45 1001.6 809.25 1002.4 808.41 1003.2 807.76 1004.0 807.41 1004.8 807.77 1005.6 807.21 1006.4 808.07 1007.2 809.27 1008.0 809.12 1008.8 808.95 1009.6 808.56 1010.4 807.27 1011.2 808.11 1012.0 807.76 1012.8 808.79 1013.6 808.02 1014.4 807.27 1015.2 808.36 1016.0 809.30 1016.8 807.13 1017.6 809.05 1018.4 806.54 1019.2 807.26 1020.0 807.18 1020.8 808.66 1021.6 809.24 1022.4 808.66 1023.2 807.45 1024.0 809.05 1024.8 807.45 1025.6 807.19 1026.4 809.13 1027.2 808.33 1028.0 808.51 1028.8 808.43 1029.6 809.34 1030.4 807.86 1031.2 808.94 1032.0 808.52 1032.8 808.99 1033.6 807.77 1034.4 808.60 1035.2 808.15 1036.0 807.39 1036.8 807.71 1037.6 808.91 1038.4 807.33 1039.2 809.74 1040.0 807.52 1040.8 807.18 1041.6 807.41 1042.4 809.79 1043.2 808.10 1044.0 807.51 1044.8 807.18 1045.6 806.62 1046.4 808.51 1047.2 808.34 1048.0 808.52 1048.8 808.64 1049.6 806.69 1050.4 808.21 1051.2 807.55 1052.0 808.87 1052.8 808.88 1053.6 809.08 1054.4 806.69 1055.2 809.02 1056.0 809.15 1056.8 809.24 1057.6 806.81 1058.4 807.10 1059.2 806.82 1060.0 806.60 1060.8 808.96 1061.6 808.85 1062.4 808.34 1063.2 808.89 1064.0 808.33 1064.8 807.33 1065.6 806.79 1066.4 806.78 1067.2 808.70 1068.0 807.09 1068.8 807.43 1069.6 807.73 1070.4 806.56 1071.2 807.24 1072.0 807.32 1072.8 808.58 1073.6 808.17 1074.4 808.03 1075.2 809.90 1076.0 808.56 1076.8 809.57 1077.6 808.89 1078.4 807.19 1079.2 808.30 1080.0 808.37 1080.8 809.34 1081.6 808.11 1082.4 808.54 1083.2 808.06 1084.0 807.13 1084.8 809.00 1085.6 806.76 1086.4 808.88 1087.2 806.99 1088.0 806.50 1088.8 807.09 1089.6 808.71 1090.4 809.34 1091.2 806.51 1092.0 807.92 1092.8 807.93 1093.6 808.81 1094.4 807.04 1095.2 807.93 1096.0 807.51 1096.8 808.91 1097.6 807.26 1098.4 809.24 1099.2 807.32 1100.0 807.12 1100.8 808.53 1101.6 807.95 1102.4 806.82 1103.2 808.35 1104.0 806.73 1104.8 808.78 1105.6 808.52 1106.4 808.78 1107.2 808.32 1108.0 807.53 1108.8 807.66 1109.6 807.64 1110.4 809.68 1111.2 807.35 1112.0 809.68 1112.8 807.17 1113.6 807.70 1114.4 807.86 1115.2 809.71 1116.0 808.55 1116.8 808.20 1117.6 809.66 1118.4 807.78 1119.2 807.84 1120.0 808.04 1120.8 808.69 1121.6 808.68 1122.4 808.37 1123.2 807.51 1124.0 807.45 1124.8 806.95 1125.6 808.95 1126.4 808.42 1127.2 808.65 1128.0 806.99 1128.8 807.77 1129.6 808.74 1130.4 808.18 1131.2 806.87 1132.0 807.84 1132.8 809.07 1133.6 807.19 1134.4 807.06 1135.2 807.37 1136.0 808.54 1136.8 808.95 1137.6 806.95 1138.4 806.95 1139.2 807.22 1140.0 807.45 1140.8 808.01 1141.6 806.97 1142.4 807.45 1143.2 807.05 1144.0 809.33 1144.8 808.61 1145.6 806.80 1146.4 809.29 1147.2 807.39 1148.0 808.21 1148.8 809.95 1149.6 809.41 1150.4 809.23 1151.2 808.36 1152.0 807.67 1152.8 808.95 1153.6 807.41 1154.4 807.70 1155.2 808.23 1156.0 807.20 1156.8 807.66 1157.6 808.79 1158.4 808.51 1159.2 807.95 1160.0 808.33 1160.8 807.84 1161.6 806.91 1162.4 808.25 1163.2 807.67 1164.0 808.65 1164.8 809.13 1165.6 807.75 1166.4 808.16 1167.2 808.67 1168.0 807.72 1168.8 807.16 1169.6 808.59 1170.4 809.05 1171.2 808.74 1172.0 808.53 1172.8 808.97 1173.6 808.47 1174.4 808.36 1175.2 807.82 1176.0 807.41 1176.8 808.32 1177.6 806.78 1178.4 807.72 1179.2 808.77 1180.0 808.57 1180.8 808.33 1181.6 807.23 1182.4 807.73 1183.2 807.82 1184.0 808.30 1184.8 808.29 1185.6 809.06 1186.4 809.80 1187.2 807.63 1188.0 809.00 1188.8 809.36 1189.6 808.23 1190.4 808.52 1191.2 809.93 1192.0 807.21 1192.8 808.68 1193.6 806.97 1194.4 808.77 1195.2 809.23 1196.0 808.01 1196.8 806.79 1197.6 808.17 1198.4 808.07 1199.2 808.58 1200.0 807.99 1200.8 808.35 1201.6 808.90 1202.4 808.01 1203.2 807.69 1204.0 809.25 1204.8 807.11 1205.6 808.48 1206.4 807.64 1207.2 808.71 1208.0 806.85 1208.8 809.35 1209.6 807.53 1210.4 806.66 1211.2 807.30 1212.0 807.66 1212.8 806.54 1213.6 807.71 1214.4 807.72 1215.2 808.52 1216.0 807.52 1216.8 807.27 1217.6 807.15 1218.4 808.65 1219.2 809.23 1220.0 808.03 1220.8 807.13 1221.6 809.42 1222.4 808.24 1223.2 807.71 1224.0 807.47 1224.8 809.35 1225.6 809.45 1226.4 808.94 1227.2 808.46 1228.0 808.73 1228.8 807.76 1229.6 809.90 1230.4 807.52 1231.2 808.35 1232.0 808.87 1232.8 808.87 1233.6 807.86 1234.4 807.35 1235.2 808.09 1236.0 806.86 1236.8 808.92 1237.6 807.53 1238.4 808.97 1239.2 807.28 1240.0 807.59 1240.8 807.24 1241.6 807.74 1242.4 807.04 1243.2 806.51 1244.0 808.59 1244.8 807.32 1245.6 807.21 1246.4 807.38 1247.2 807.89 1248.0 807.74 1248.8 808.35 1249.6 808.41 1250.4 807.55 1251.2 809.19 1252.0 808.98 1252.8 806.67 1253.6 808.90 1254.4 809.13 1255.2 808.77 1256.0 806.91 1256.8 808.91 1257.6 808.34 1258.4 807.14 1259.2 807.13 1260.0 809.86 1260.8 809.00 1261.6 807.83 1262.4 807.39 1263.2 807.51 1264.0 807.78 1264.8 809.35 1265.6 808.10 1266.4 807.54 1267.2 809.12 1268.0 808.80 1268.8 806.99 1269.6 809.08 1270.4 808.26 1271.2 808.77 1272.0 808.44 1272.8 809.09 1273.6 808.79 1274.4 808.93 1275.2 807.07 1276.0 808.51 1276.8 808.04 1277.6 808.65 1278.4 807.77 1279.2 809.06 1280.0 808.11 1280.8 807.27 1281.6 807.18 1282.4 806.90 1283.2 807.93 1284.0 806.67 1284.8 807.85 1285.6 806.92 1286.4 807.92 1287.2 807.94 1288.0 808.06 1288.8 809.00 1289.6 806.52 1290.4 808.94 1291.2 807.86 1292.0 808.13 1292.8 808.43 1293.6 808.94 1294.4 807.59 1295.2 808.31 1296.0 809.89 1296.8 807.32 1297.6 808.95 1298.4 808.94 1299.2 807.18 1300.0 808.87 1300.8 809.08 1301.6 809.80 1302.4 808.06 1303.2 809.95 1304.0 808.58 1304.8 807.91 1305.6 809.10 1306.4 806.60 1307.2 808.58 1308.0 808.31 1308.8 807.48 1309.6 809.00 1310.4 807.56 1311.2 807.88 1312.0 808.02 1312.8 808.73 1313.6 807.11 1314.4 807.76 1315.2 807.72 1316.0 808.11 1316.8 808.90 1317.6 807.35 1318.4 808.90 1319.2 807.67 1320.0 807.96 1320.8 807.29 1321.6 807.97 1322.4 809.33 1323.2 808.40 1324.0 808.80 1324.8 807.46 1325.6 807.42 1326.4 807.37 1327.2 808.20 1328.0 808.34 1328.8 808.77 1329.6 806.62 1330.4 808.60 1331.2 809.07 1332.0 808.08 1332.8 807.24 1333.6 807.97 1334.4 807.12 1335.2 807.65 1336.0 809.77 1336.8 808.87 1337.6 809.01 1338.4 809.39 1339.2 809.74 1340.0 808.87 1340.8 808.89 1341.6 808.32 1342.4 808.52 1343.2 808.23 1344.0 808.47 1344.8 807.12 1345.6 808.43 1346.4 807.83 1347.2 808.71 1348.0 806.79 1348.8 807.03 1349.6 806.61 1350.4 808.75 1351.2 809.15 1352.0 808.40 1352.8 807.57 1353.6 808.89 1354.4 808.78 1355.2 808.13 1356.0 807.25 1356.8 807.38 1357.6 807.72 1358.4 807.42 1359.2 807.75 1360.0 808.36 1360.8 809.21 1361.6 806.66" fill="none" stroke="#4a7fb3" stroke-width="0.850" stroke-linejoin="round" opacity=".9"/>
<path d="M96 807.800H1361" stroke="#4a7fb3" stroke-width="1.300" opacity=".95"/>
<path d="M96 809.100H1361" stroke="#7da2cb" stroke-width="1.100" opacity=".75"/>
<path d="M849.200 199.700V808" stroke="#6f9ac6" stroke-width="1.300" fill="none"/>
<path d="M850.500 196.600V808" stroke="#4a7fb3" stroke-width="1.500" fill="none"/>
<path d="M852 248V420" stroke="#86a9cf" stroke-width="1.200" fill="none"/>
<path d="M848.600 416V806L847 811.500 848.800 808.500 852.500 808.500 856 808.300 853.600 806 852.600 800V416z" fill="#4a7fb3"/>
<path d="M397.8 777.7V810.6" stroke="#e8341c" stroke-width="1.150" opacity=".92"/>
<path d="M453.4 783.0V815.4" stroke="#e8341c" stroke-width="1.150" opacity=".92"/>
<path d="M470.1 780.4V811.9" stroke="#e8341c" stroke-width="1.150" opacity=".92"/>
<path d="M474.3 783.0V814.5" stroke="#e8341c" stroke-width="1.150" opacity=".92"/>
<path d="M479.3 780.4V812.4" stroke="#e8341c" stroke-width="1.150" opacity=".92"/>
<path d="M489.5 775.0V808.5" stroke="#e8341c" stroke-width="1.150" opacity=".92"/>
<path d="M491.9 777.2V809.7" stroke="#e8341c" stroke-width="1.150" opacity=".92"/>
<path d="M511.1 754.3V791.0" stroke="#e8341c" stroke-width="1.150" opacity=".92"/>
<path d="M511.1 791.0V817.4" stroke="#4a7fb3" stroke-width="1.150"/>
<path d="M546.8 774.2V808.5" stroke="#e8341c" stroke-width="1.150" opacity=".92"/>
<path d="M554.3 756.4V788.0" stroke="#e8341c" stroke-width="1.150" opacity=".92"/>
<path d="M554.3 788.0V813.3" stroke="#4a7fb3" stroke-width="1.150"/>
<path d="M556.8 764.4V814.7" stroke="#e8341c" stroke-width="1.150" opacity=".92"/>
<path d="M560.2 749.7V782.0" stroke="#e8341c" stroke-width="1.150" opacity=".92"/>
<path d="M560.2 782.0V815.0" stroke="#4a7fb3" stroke-width="1.150"/>
<path d="M559.4 776.0V811.0" stroke="#e8341c" stroke-width="1.150" opacity=".92"/>
<path d="M565.5 760.0V793.0" stroke="#e8341c" stroke-width="1.150" opacity=".92"/>
<path d="M565.5 793.0V816.0" stroke="#4a7fb3" stroke-width="1.150"/>
<path d="M566.6 764.4V812.0" stroke="#e8341c" stroke-width="1.150" opacity=".92"/>
<path d="M573.3 741.3V815.4" stroke="#e8341c" stroke-width="1.150" opacity=".92"/>
<path d="M572.4 778.0V814.0" stroke="#e8341c" stroke-width="1.150" opacity=".92"/>
<path d="M578.1 779.2V811.5" stroke="#e8341c" stroke-width="1.150" opacity=".92"/>
<path d="M586.6 755.5V815.0" stroke="#e8341c" stroke-width="1.150" opacity=".92"/>
<path d="M585.8 780.0V813.0" stroke="#e8341c" stroke-width="1.150" opacity=".92"/>
<path d="M587.4 790.0V812.0" stroke="#e8341c" stroke-width="1.150" opacity=".92"/>
<path d="M587.4 812.0V813.0" stroke="#4a7fb3" stroke-width="1.150"/>
<path d="M591.8 761.2V816.0" stroke="#e8341c" stroke-width="1.150" opacity=".92"/>
<path d="M592.6 772.0V812.0" stroke="#e8341c" stroke-width="1.150" opacity=".92"/>
<path d="M593.6 779.5V810.6" stroke="#e8341c" stroke-width="1.150" opacity=".92"/>
<path d="M615.4 759.4V816.0" stroke="#e8341c" stroke-width="1.150" opacity=".92"/>
<path d="M614.6 782.0V814.0" stroke="#e8341c" stroke-width="1.150" opacity=".92"/>
<path d="M652.2 757.7V816.0" stroke="#e8341c" stroke-width="1.150" opacity=".92"/>
<path d="M652.9 770.0V792.0" stroke="#e8341c" stroke-width="1.150" opacity=".92"/>
<path d="M652.9 792.0V812.0" stroke="#4a7fb3" stroke-width="1.150"/>
<path d="M1069.5 753.8V785.7" stroke="#e8341c" stroke-width="1.150" opacity=".92"/>
<path d="M1069.5 785.7V813.3" stroke="#4a7fb3" stroke-width="1.150"/>
<path d="M1095.1 739.0V816.0" stroke="#e8341c" stroke-width="1.150" opacity=".92"/>
<path d="M1096.1 751.0V816.0" stroke="#e8341c" stroke-width="1.150" opacity=".92"/>
<path d="M1096.6 782.0V816.0" stroke="#e8341c" stroke-width="1.150" opacity=".92"/>
<path d="M1103.2 782.2V814.2" stroke="#e8341c" stroke-width="1.150" opacity=".92"/>
</g>
<path d="M712.500 162V172M712.500 167H1074.900M1074.900 162V172" stroke="#2f8a24" stroke-width="2" fill="none"/>
<text x="893.700" y="159.800" font-size="12.800" fill="#2f8a24" text-anchor="middle">1.00</text>
<path d="M712.500 439.800 L735 436.500 L766 429.500 L800 424.500 L820 420.600 L835 418.200 L842.200 414.700 L849.600 414.300 L850.200 380 L851 320 L851.800 270 C852 258 853 252 861 250.500 L900 245 L940 240.500 L965 236.500 L1000 231.800 L1030 228.200 L1069 223 L1070.500 220.600 L1074.900 220.300" stroke="#2f8a24" stroke-width="2" fill="none" stroke-linejoin="round"/>
<path d="M712.600 838V848.500M712.600 843H1074.800M1074.800 838V848.500M1069.500 826.600V843" stroke="#7b1f8a" stroke-width="2" fill="none"/>
<text x="893.700" y="860.800" font-size="12.800" fill="#7b1f8a" text-anchor="middle">36.057</text>
<text x="893.700" y="873.900" font-size="12.800" fill="#7b1f8a" text-anchor="middle">(s)</text>
<path d="M1252.600 119.700V895.400" stroke="#777" stroke-width="1.100" stroke-dasharray="2.100 2.100" fill="none"/>
<circle cx="1252.500" cy="808" r="4.300" fill="none" stroke="#777" stroke-width="1.600"/>
<text x="1252.600" y="130" font-size="12.800" fill="#111" text-anchor="middle">1.775</text>
<text x="1252.600" y="140.800" font-size="12.800" fill="#d68f1f" text-anchor="middle">223.260 Hz</text>
<path d="M96.150 119.200V896.600" stroke="#363636" stroke-width="1.700" fill="none"/>
<path d="M1360.700 119.200V896.600" stroke="#363636" stroke-width="1.600" fill="none"/>
<path d="M95.300 895.800H1361.500" stroke="#363636" stroke-width="1.650" fill="none"/>
<path d="M95.300 119.670H1361.500" stroke="#363636" stroke-width="0.850" fill="none"/>
</svg>
<div class="abs" style="left:1365px;top:118.600px;width:446px;height:202.600px;transform:translateX(0.700px);background:#fff;box-shadow:0 2px 1px -1px rgba(0,0,0,.2),0 1px 1px 0 rgba(0,0,0,.14),0 1px 3px 0 rgba(0,0,0,.12);font-size:12.300px;color:#1c1c28">
<div class="abs" style="left:0;top:0;width:100%;height:47.500px;background:#eeeeee;border-bottom:1px solid #e2e2e2"><span class="abs" style="left:23.800px;top:17px;line-height:14px">Info</span></div>
<div class="abs" style="left:0;top:47.500px;width:100%;height:66px;background:#eeeeee"><span class="abs" style="left:23.800px;top:26px;line-height:14px">Multiplicity</span></div>
<div class="abs" style="left:0;top:113.400px;width:100%;height:59.600px;background:#999;color:#fff">
<span class="abs" style="left:30px;top:7px;width:18px;height:18px;transform:translate(0.600px,0.300px);background:#fff;border-radius:2px"><svg width="18" height="18" viewBox="0 0 18 18" style="position:absolute;left:0;top:0"><path d="M2.200 9.200L7.300 14.200 16 4.200" fill="none" stroke="#999" stroke-width="2.300"/></svg></span>
<span class="abs" style="left:56.800px;top:5.800px;width:20.400px;height:20.400px;border:2px solid #fff;border-radius:50%;text-align:center;font-size:11px;line-height:16.500px">1</span>
<span class="abs" style="left:82.900px;top:9.500px;line-height:14px;white-space:nowrap;font-size:12.150px">36.057 (ppm)</span>
<span class="abs" style="left:160px;top:6.300px;width:270px;height:26px;border:1px solid #858585;border-radius:4px;font-size:14px;line-height:21px;padding-left:13.200px">s</span>
<span class="abs" style="left:63px;top:33.600px;width:367px;height:25.600px;border:1px solid #858585;border-radius:4px;font-size:14px;line-height:18.500px;padding-left:13px;white-space:pre">J =   -</span>
</div>
<div class="abs" style="left:198.500px;top:180px;font-size:14px;line-height:16px;color:#333;white-space:nowrap">(36.0570, 5.13e+7)</div>
</div>
<div class="abs" style="left:1639px;top:62px;width:190px;height:292px;background:#fff;border-radius:4px;box-shadow:0 5px 5px -3px rgba(0,0,0,.2),0 8px 10px 1px rgba(0,0,0,.14),0 3px 14px 2px rgba(0,0,0,.12);font-size:12px;color:#222;padding-top:8px">
<div style="height:46px;line-height:46px;padding-left:16px;white-space:nowrap;background:#dcdcdc;">write peak &amp; save</div>
<div style="height:46px;line-height:46px;padding-left:16px;white-space:nowrap;">write peak, save &amp; close</div>
<div style="height:46px;line-height:46px;padding-left:16px;white-space:nowrap;">write multiplicity &amp; save</div>
<div style="height:46px;line-height:46px;padding-left:16px;white-space:nowrap;">write multiplicity, save &amp; close</div>
<div style="height:46px;line-height:46px;padding-left:16px;white-space:nowrap;">save</div>
<div style="height:46px;line-height:46px;padding-left:16px;white-space:nowrap;">save &amp; close</div>
</div>
<div class="abs" style="left:1631px;top:62px;width:215px;height:289px;border:2px solid rgba(255,0,0,.6)"></div>
</div></body></html>
